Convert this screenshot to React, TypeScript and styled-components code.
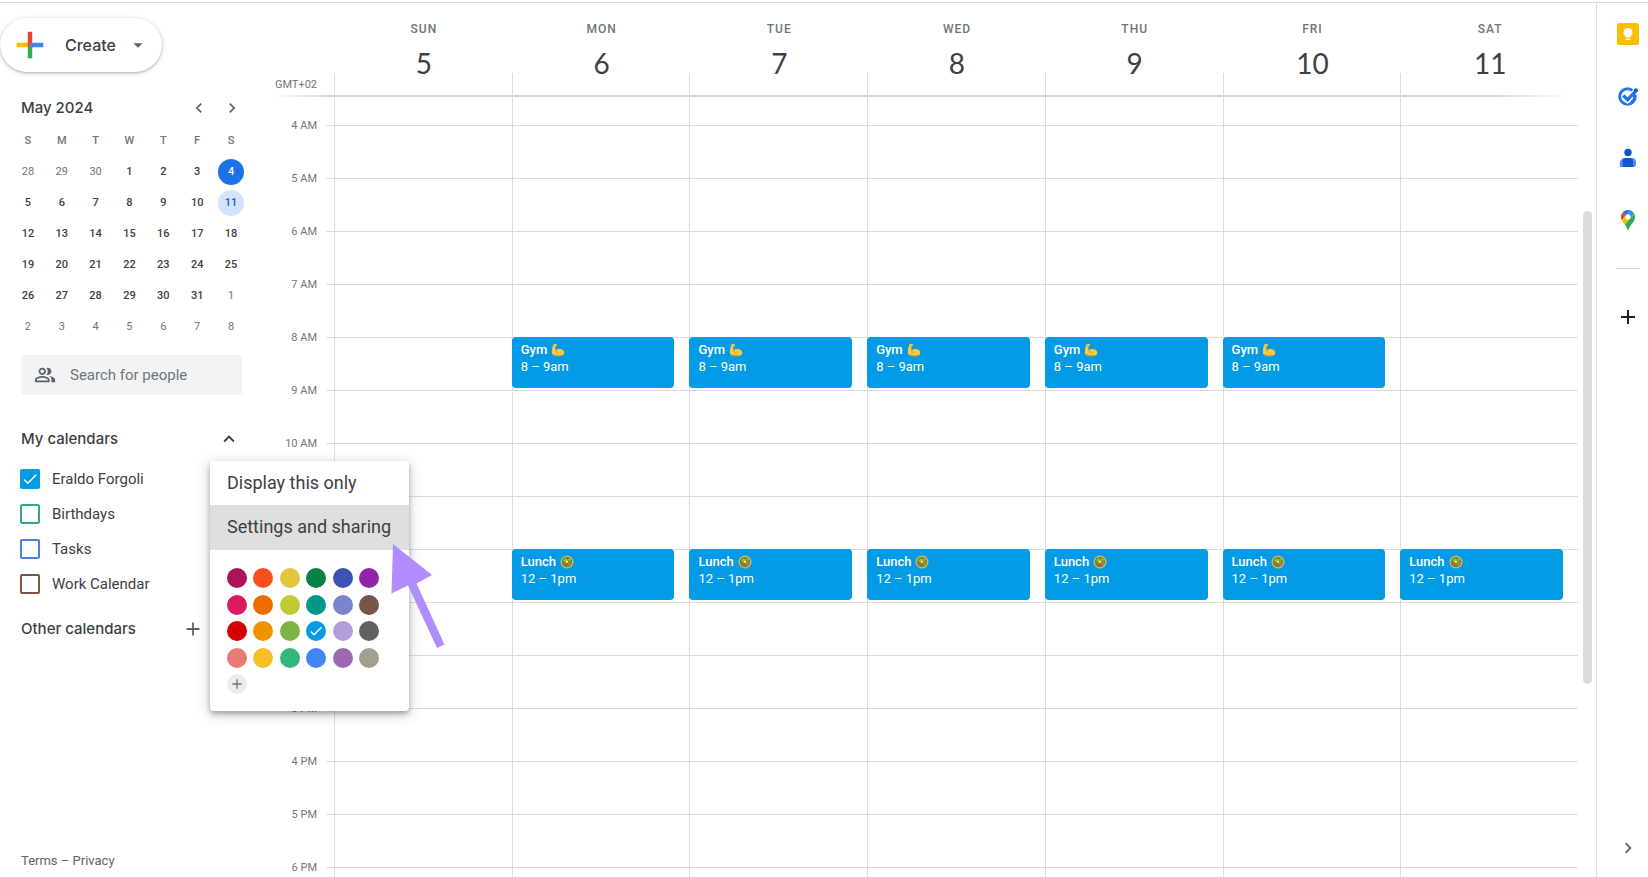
import React from "react";
import styled, { createGlobalStyle } from "styled-components";
import {
  MdAdd,
  MdArrowDropDown,
  MdCheck,
  MdChevronLeft,
  MdChevronRight,
  MdKeyboardArrowUp,
  MdOutlinePeopleAlt,
} from "react-icons/md";

const text = "#3c4043";
const muted = "#70757a";
const line = "#dadce0";
const blue = "#039be5";
const displayFont = `Inter, Roboto, sans-serif`;

const GlobalStyle = createGlobalStyle`
  * { box-sizing: border-box; }
  body { margin: 0; background: #fff; color: ${text}; font-family: Roboto, "Liberation Sans", sans-serif; }
  button { font: inherit; color: inherit; background: none; border: 0; padding: 0; cursor: pointer; }
  a { color: inherit; text-decoration: none; }
  h1, h2, p { margin: 0; font-weight: 500; }
`;

/* ---------- page frame ---------- */

const Page = styled.div`
  position: relative;
  display: grid;
  grid-template-columns: 270px minmax(0, 1fr) 52px;
  grid-template-rows: minmax(0, 1fr);
  height: 100vh;
  padding-top: 2px;
  overflow: hidden;
`;

const Sidebar = styled.aside`
  display: flex;
  flex-direction: column;
  align-items: flex-start;
  border-top: 1px solid ${line};
  padding: 15px 0 6px;
`;

const Main = styled.main`
  display: grid;
  grid-template-rows: 94px minmax(0, 1fr);
  border-top: 1px solid ${line};
`;

const Rail = styled.nav`
  display: flex;
  flex-direction: column;
  align-items: center;
  border-top: 1px solid ${line};
  border-left: 1px solid ${line};
  padding: 15px 0 18px 10px;
`;

/* ---------- sidebar ---------- */

const CreateButton = styled.button`
  display: flex;
  align-items: center;
  height: 54px;
  width: 162px;
  padding-left: 10px;
  border-radius: 27px;
  background: #fff;
  box-shadow: 0 1px 2px rgba(60, 64, 67, 0.3), 0 1px 4px 1px rgba(60, 64, 67, 0.15);
  font: 500 16px ${displayFont};
  svg:last-child { margin-left: 11px; color: #5f6368; }
`;

const CreateLabel = styled.span`
  margin-left: 15px;
`;

const MonthBar = styled.div`
  display: flex;
  align-items: center;
  justify-content: space-between;
  width: 100%;
  height: 32px;
  margin-top: 20px;
  padding: 0 28px 0 21px;
`;

const Heading = styled.h2`
  font: 500 15px/20px ${displayFont};
`;

const MonthNav = styled.div`
  display: flex;
  gap: 13px;
  color: #5f6368;
`;

const IconButton = styled.button`
  display: grid;
  place-items: center;
`;

const MiniCalendar = styled.table`
  width: 237px;
  margin-left: 11px;
  border-collapse: collapse;
  table-layout: fixed;
  font-size: 11px;
  text-align: center;
  th, td { height: 31px; padding: 0; }
  th { height: 32px; font-weight: 500; color: ${muted}; }
`;

const DayButton = styled.button<{ $kind: "other" | "month" | "today" | "picked" }>`
  width: 26px;
  height: 26px;
  border-radius: 50%;
  font-weight: ${(p) => (p.$kind === "other" ? 400 : 500)};
  color: ${(p) => ({ other: muted, month: text, today: "#fff", picked: "#185abc" })[p.$kind]};
  background: ${(p) => ({ other: "none", month: "none", today: "#1a73e8", picked: "#d2e3fc" })[p.$kind]};
`;

const SearchBox = styled.label`
  display: flex;
  align-items: center;
  gap: 14px;
  width: 221px;
  height: 40px;
  margin: 13px 0 0 21px;
  padding: 0 13px;
  border-radius: 4px;
  background: #f1f3f4;
  color: #5f6368;
  svg { flex: none; }
  input {
    min-width: 0;
    width: 100%;
    border: 0;
    padding: 0;
    background: none;
    color: inherit;
    font: 400 15px Roboto, sans-serif;
  }
  input::placeholder { color: ${muted}; opacity: 1; }
`;

const SectionBar = styled.div<{ $end: number }>`
  display: flex;
  align-items: center;
  justify-content: space-between;
  width: 100%;
  height: 40px;
  padding: 0 ${(p) => p.$end}px 0 21px;
`;

const CalendarSections = styled.section`
  width: 100%;
  margin-top: 24px;
`;

const CalendarList = styled.ul`
  list-style: none;
  margin: 0 0 8px;
  padding: 2px 0 0 20px;
`;

const CalendarItem = styled.label`
  display: flex;
  align-items: center;
  gap: 12px;
  height: 35px;
  font-size: 15px;
`;

const CheckInput = styled.input<{ $color: string }>`
  appearance: none;
  width: 20px;
  height: 20px;
  margin: 0;
  border: 2px solid ${(p) => p.$color};
  border-radius: 2px;
  background: #fff;
  &:checked { background: ${(p) => p.$color}; }
`;

const CheckHolder = styled.span`
  position: relative;
  display: grid;
  svg { position: absolute; inset: 1px; color: #fff; pointer-events: none; }
`;

const Legal = styled.p`
  margin: auto 0 0 21px;
  font-size: 13px;
  line-height: 20px;
  font-weight: 400;
  color: #5f6368;
`;

/* ---------- week view ---------- */

const weekColumns = "56px 8px repeat(7, minmax(0, 1fr)) 18px";

const WeekHeader = styled.header`
  display: grid;
  grid-template-columns: ${weekColumns};
  background: linear-gradient(90deg, transparent 0, #d3d5d8 64px, #d3d5d8 calc(100% - 110px), transparent calc(100% - 24px))
    left bottom / 100% 2px no-repeat;
`;

const Zone = styled.span`
  grid-column: 1 / 3;
  align-self: end;
  padding: 0 17px 4px 0;
  text-align: right;
  font-size: 11px;
  line-height: 16px;
  color: ${muted};
`;

const DayHead = styled.div`
  display: flex;
  flex-direction: column;
  align-items: center;
  padding: 18px 0 0 2px;
  background: linear-gradient(${line}, ${line}) left bottom / 1px 24px no-repeat;
`;

const DayName = styled.span`
  font-size: 12px;
  line-height: 16px;
  font-weight: 500;
  letter-spacing: 1px;
  color: ${muted};
`;

const DayNumber = styled.span`
  margin-top: 8px;
  font: 400 28px/36px Lato, Roboto, sans-serif;
`;

const WeekBody = styled.div`
  display: grid;
  grid-template-columns: minmax(0, 1fr) 18px;
  grid-template-rows: minmax(0, 1fr);
  overflow: hidden;
`;

const WeekGrid = styled.div`
  display: grid;
  grid-template-columns: 56px 8px repeat(7, minmax(0, 1fr));
  grid-template-rows: 29px repeat(15, 53px);
`;

const HourLine = styled.div<{ $row: number }>`
  grid-row: ${(p) => p.$row};
  grid-column: 2 / -1;
  border-bottom: 1px solid ${line};
`;

const HourLabel = styled.span<{ $row: number }>`
  grid-row: ${(p) => p.$row};
  grid-column: 1;
  align-self: end;
  margin: 0 9px -8px 0;
  text-align: right;
  font-size: 11px;
  line-height: 16px;
  color: ${muted};
`;

const DayLine = styled.div<{ $day: number }>`
  grid-row: 1 / -1;
  grid-column: ${(p) => p.$day + 3};
  border-left: 1px solid ${line};
`;

const EventCard = styled.button<{ $day: number; $row: number }>`
  grid-row: ${(p) => p.$row};
  grid-column: ${(p) => p.$day + 3};
  display: flex;
  flex-direction: column;
  align-items: flex-start;
  margin: -1px 15px 3px 0;
  padding: 4px 9px;
  border-radius: 4px;
  background: ${blue};
  color: #fff;
  font-size: 13px;
  line-height: 17px;
  text-align: left;
`;

const EventTitle = styled.strong`
  display: flex;
  align-items: center;
  gap: 4px;
  font-weight: 500;
`;

const ScrollTrack = styled.div`
  display: grid;
  grid-template-rows: 114fr 473fr 193fr;
  padding: 0 4px 0 5px;
`;

const ScrollThumb = styled.div`
  grid-row: 2;
  border-radius: 5px;
  background: #dadbdd;
`;

/* ---------- right rail ---------- */

const RailButton = styled.button`
  display: grid;
  place-items: center;
  width: 32px;
  height: 32px;
  margin-bottom: 30px;
`;

const RailRule = styled.hr`
  width: 24px;
  height: 1px;
  margin: 2px 0 32px;
  border: 0;
  background: ${line};
`;

const RailToggle = styled(IconButton)`
  margin-top: auto;
  color: #5f6368;
`;

/* ---------- calendar menu ---------- */

const Menu = styled.div`
  position: absolute;
  left: 210px;
  top: 461px;
  width: 199px;
  border-radius: 4px;
  background: #fff;
  overflow: hidden;
  box-shadow: 0 3px 5px rgba(0, 0, 0, 0.28), 0 3px 14px 2px rgba(0, 0, 0, 0.14);
`;

const MenuItem = styled.button<{ $active?: boolean }>`
  display: block;
  width: 100%;
  height: ${(p) => (p.$active ? 45 : 44)}px;
  padding: 0 17px 2px;
  background: ${(p) => (p.$active ? "#dfdfdf" : "#fff")};
  font-size: 18px;
  text-align: left;
  white-space: nowrap;
`;

const Swatches = styled.div`
  display: grid;
  grid-template-columns: repeat(6, 20px);
  justify-content: space-between;
  align-content: space-between;
  width: 152px;
  height: 126px;
  margin: 18px 0 17px 17px;
`;

const Swatch = styled.button<{ $color: string }>`
  display: grid;
  place-items: center;
  width: 20px;
  height: 20px;
  border-radius: 50%;
  background: ${(p) => p.$color};
  color: ${(p) => (p.$color === "#ececec" ? "#70757a" : "#fff")};
`;

const Pointer = styled.svg`
  position: absolute;
  left: 390px;
  top: 542px;
  pointer-events: none;
`;

/* ---------- drawings ---------- */

const CreateMark = () => (
  <svg width="40" height="40" viewBox="0 0 36 36" aria-hidden="true">
    <path fill="#34a853" d="M16 16v14h4V20z" />
    <path fill="#4285f4" d="M30 16H20l-4 4h14z" />
    <path fill="#fbbc05" d="M6 16v4h10l4-4z" />
    <path fill="#ea4335" d="M20 16V6h-4v14z" />
  </svg>
);

const ArmIcon = () => (
  <svg width="14" height="14" viewBox="0 0 14 14" aria-hidden="true">
    <path
      fill="#ffc83d"
      d="M2.600 1.200C3.600.4 5.600.5 5.900 1.400c.3 1-.3 1.900-1.400 2.100-.3 1.600-.1 3 .3 4.200C5.800 6.500 7.400 5.700 9.300 5.900c2.500.2 4 1.900 4 3.900 0 2.400-2 3.400-5 3.400-3.300 0-6.300-.5-7-2C.5 9.300 1 4 2.600 1.200z"
    />
    <path fill="none" stroke="#dd8a1c" strokeWidth="0.8" d="M4.800 7.700c.4 1.200 1.200 1.800 2.400 1.900M3.400 3.200l1.200.2M2 11.400c2 1.300 6 1.600 9 .9" />
  </svg>
);

const SaladIcon = () => (
  <svg width="14" height="14" viewBox="0 0 14 14" aria-hidden="true">
    <circle cx="7" cy="7" r="6.500" fill="#d9b877" />
    <circle cx="7" cy="7" r="5.300" fill="#5f8f2e" />
    <path fill="#8fbf3a" d="M3 5.500l3-2.500 1.500 2-2 2.500zM8 8l3-1.500.5 2.500-2.500 2z" />
    <circle cx="4.300" cy="8.600" r="1.600" fill="#d9572b" />
    <circle cx="9.800" cy="8.400" r="1.500" fill="#e0632f" />
    <circle cx="9.400" cy="4.600" r="1.200" fill="#e6a23c" />
    <circle cx="7" cy="6.800" r="1.300" fill="#f3e08a" />
  </svg>
);

const KeepIcon = () => (
  <svg width="22" height="22" viewBox="0 0 22 22" aria-hidden="true">
    <rect width="22" height="22" rx="2.500" fill="#fbbc04" />
    <circle cx="11" cy="9.500" r="4.500" fill="#fff" />
    <path fill="#fff" d="M8.700 12h4.600v2.500H8.700zM8.700 15.500h4.600v1.500H8.700z" />
  </svg>
);

const TasksIcon = () => (
  <svg width="22" height="22" viewBox="0 0 22 22" fill="none" aria-hidden="true">
    <circle cx="10.500" cy="11.500" r="7.800" stroke="#2477eb" strokeWidth="3" />
    <path d="M6.500 10.800l4 4L20 5" stroke="#fff" strokeWidth="6" />
    <path d="M6.300 10.500l4.300 4.200L19.800 5" stroke="#1f6fe5" strokeWidth="3.200" />
    <path d="M17 8.500a7.800 7.800 0 0 1-2.500 9" stroke="#2477eb" strokeWidth="3" />
    <circle cx="18.800" cy="5.300" r="2" fill="#1557c0" />
  </svg>
);

const ContactsIcon = () => (
  <svg width="18" height="20" viewBox="0 0 18 20" aria-hidden="true">
    <circle cx="9" cy="4.500" r="3.700" fill="#0b57d0" />
    <path fill="#5b87f5" d="M6 10h7a4 4 0 0 1 4 4v2.500a2.500 2.500 0 0 1-2.500 2.500h-13A.8.8 0 0 1 .8 18.200V15A5 5 0 0 1 6 10z" />
    <path fill="#0b57d0" d="M6.500 10H10a4 4 0 0 1 4 4v5H3.800v-5.500A3.500 3.500 0 0 1 6.500 10z" />
  </svg>
);

const MapsIcon = () => (
  <svg width="14" height="20" viewBox="0 0 92.300 132.300" aria-hidden="true">
    <path fill="#1a73e8" d="M60.200 2.200C55.800.8 51 0 46.100 0 32 0 19.300 6.400 10.800 16.500l21.800 18.300L60.200 2.200z" />
    <path fill="#ea4335" d="M10.800 16.500C4.100 24.500 0 34.900 0 46.100c0 8.700 1.700 15.700 4.600 22l28-33.300-21.800-18.300z" />
    <path fill="#4285f4" d="M46.200 28.500c9.800 0 17.700 7.900 17.700 17.700 0 4.300-1.600 8.300-4.200 11.400 0 0 13.900-16.600 27.500-32.700-5.600-10.800-15.300-19-27-22.700L32.600 34.800c3.300-3.800 8.100-6.300 13.600-6.300" />
    <path fill="#fbbc04" d="M46.200 63.800c-9.800 0-17.700-7.900-17.700-17.700 0-4.300 1.500-8.300 4.100-11.300l-28 33.300c4.800 10.600 12.800 19.200 21 29.900l34.100-40.500c-3.300 3.900-8.100 6.300-13.500 6.300" />
    <path fill="#34a853" d="M59.100 109.200c15.400-24.100 33.300-35 33.300-63 0-7.700-1.900-14.900-5.200-21.300L25.600 98c2.600 3.400 5.300 7.300 7.900 11.300 9.400 14.500 6.800 23.100 12.800 23.100s3.400-8.700 12.800-23.200" />
  </svg>
);

/* ---------- data ---------- */

const weekdayLetters = ["S", "M", "T", "W", "T", "F", "S"];
const weeks = [
  [28, 29, 30, 1, 2, 3, 4],
  [5, 6, 7, 8, 9, 10, 11],
  [12, 13, 14, 15, 16, 17, 18],
  [19, 20, 21, 22, 23, 24, 25],
  [26, 27, 28, 29, 30, 31, 1],
  [2, 3, 4, 5, 6, 7, 8],
];

const dayKind = (week: number, date: number) => {
  if ((week === 0 && date > 20) || (week > 3 && date < 10)) return "other";
  if (week === 0 && date === 4) return "today";
  if (date === 11) return "picked";
  return "month";
};

const calendars = [
  { name: "Eraldo Forgoli", color: blue, on: true },
  { name: "Birthdays", color: "#33a878", on: false },
  { name: "Tasks", color: "#4a80e0", on: false },
  { name: "Work Calendar", color: "#795548", on: false },
];

const days = ["SUN", "MON", "TUE", "WED", "THU", "FRI", "SAT"];
const hours = [
  "4 AM", "5 AM", "6 AM", "7 AM", "8 AM", "9 AM", "10 AM", "11 AM",
  "12 PM", "1 PM", "2 PM", "3 PM", "4 PM", "5 PM", "6 PM",
];

const palette = [
  "#ad1457", "#f4511e", "#e4c441", "#0b8043", "#3f51b5", "#8e24aa",
  "#d81b60", "#ef6c00", "#c0ca33", "#009688", "#7986cb", "#795548",
  "#d50000", "#f09300", "#7cb342", "#039be5", "#b39ddb", "#616161",
  "#e67c73", "#f6bf26", "#33b679", "#4285f4", "#9e69af", "#a59f90",
];

export default function App() {
  return (
    <Page>
      <GlobalStyle />
      <Sidebar>
        <CreateButton>
          <CreateMark />
          <CreateLabel>Create</CreateLabel>
          <MdArrowDropDown size={22} />
        </CreateButton>

        <MonthBar>
          <Heading as="h1">May 2024</Heading>
          <MonthNav>
            <IconButton aria-label="Previous month"><MdChevronLeft size={20} /></IconButton>
            <IconButton aria-label="Next month"><MdChevronRight size={20} /></IconButton>
          </MonthNav>
        </MonthBar>

        <MiniCalendar>
          <thead>
            <tr>{weekdayLetters.map((d, i) => <th key={i} scope="col">{d}</th>)}</tr>
          </thead>
          <tbody>
            {weeks.map((week, w) => (
              <tr key={w}>
                {week.map((date) => (
                  <td key={date}><DayButton $kind={dayKind(w, date)}>{date}</DayButton></td>
                ))}
              </tr>
            ))}
          </tbody>
        </MiniCalendar>

        <SearchBox>
          <MdOutlinePeopleAlt size={22} />
          <input type="text" placeholder="Search for people" aria-label="Search for people" />
        </SearchBox>

        <CalendarSections>
          <SectionBar $end={30}>
            <Heading>My calendars</Heading>
            <IconButton aria-label="Collapse my calendars"><MdKeyboardArrowUp size={22} /></IconButton>
          </SectionBar>
          <CalendarList>
            {calendars.map((c) => (
              <li key={c.name}>
                <CalendarItem>
                  <CheckHolder>
                    <CheckInput type="checkbox" defaultChecked={c.on} $color={c.color} />
                    {c.on && <MdCheck size={18} />}
                  </CheckHolder>
                  {c.name}
                </CalendarItem>
              </li>
            ))}
          </CalendarList>
          <SectionBar $end={66}>
            <Heading>Other calendars</Heading>
            <IconButton aria-label="Add other calendars"><MdAdd size={22} color="#5f6368" /></IconButton>
          </SectionBar>
        </CalendarSections>

        <Legal><a href="#terms">Terms</a> – <a href="#privacy">Privacy</a></Legal>
      </Sidebar>

      <Main>
        <WeekHeader>
          <Zone>GMT+02</Zone>
          {days.map((d, i) => (
            <DayHead key={d}>
              <DayName>{d}</DayName>
              <DayNumber>{i + 5}</DayNumber>
            </DayHead>
          ))}
        </WeekHeader>
        <WeekBody>
          <WeekGrid>
            {hours.map((h, i) => <HourLine key={h} $row={i + 1} />)}
            {hours.map((h, i) => <HourLabel key={h} $row={i + 1}>{h}</HourLabel>)}
            {days.map((d, i) => <DayLine key={d} $day={i} />)}
            {[1, 2, 3, 4, 5].map((d) => (
              <EventCard key={d} $day={d} $row={6}>
                <EventTitle>Gym <ArmIcon /></EventTitle>
                <span>8 – 9am</span>
              </EventCard>
            ))}
            {[1, 2, 3, 4, 5, 6].map((d) => (
              <EventCard key={d} $day={d} $row={10}>
                <EventTitle>Lunch <SaladIcon /></EventTitle>
                <span>12 – 1pm</span>
              </EventCard>
            ))}
          </WeekGrid>
          <ScrollTrack><ScrollThumb /></ScrollTrack>
        </WeekBody>
      </Main>

      <Rail>
        <RailButton aria-label="Keep"><KeepIcon /></RailButton>
        <RailButton aria-label="Tasks"><TasksIcon /></RailButton>
        <RailButton aria-label="Contacts"><ContactsIcon /></RailButton>
        <RailButton aria-label="Maps"><MapsIcon /></RailButton>
        <RailRule />
        <RailButton aria-label="Get add-ons"><MdAdd size={24} color="#202124" /></RailButton>
        <RailToggle aria-label="Hide side panel"><MdChevronRight size={22} /></RailToggle>
      </Rail>

      <Menu>
        <MenuItem>Display this only</MenuItem>
        <MenuItem $active>Settings and sharing</MenuItem>
        <Swatches>
          {palette.map((c) => (
            <Swatch key={c} $color={c} aria-label={`Colour ${c}`}>
              {c === blue && <MdCheck size={16} />}
            </Swatch>
          ))}
          <Swatch $color="#ececec" aria-label="Add custom colour"><MdAdd size={16} /></Swatch>
        </Swatches>
      </Menu>
      <Pointer width="58" height="110" viewBox="0 0 58 110" aria-hidden="true">
        <path fill="#b08cff" d="M3 2l39 31-15.500 8.500L54.500 102.500l-7.500 3.500L18 43.500 1.500 51.500z" />
      </Pointer>
    </Page>
  );
}
